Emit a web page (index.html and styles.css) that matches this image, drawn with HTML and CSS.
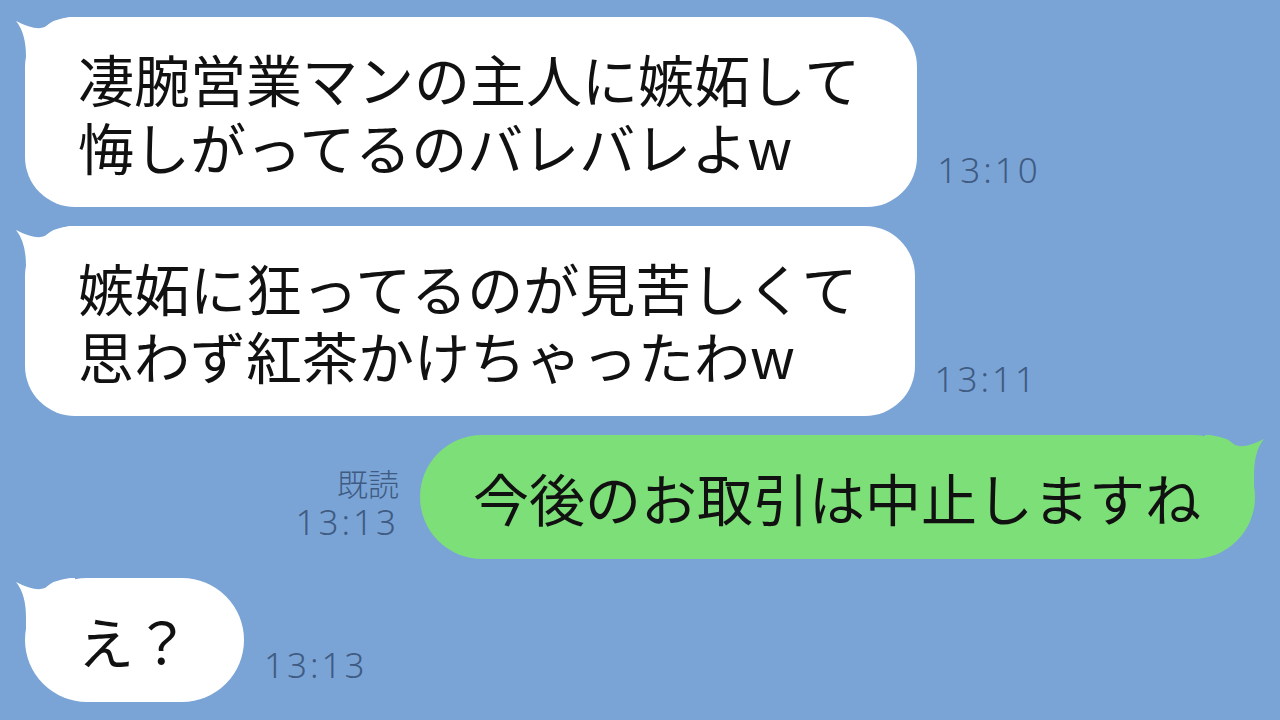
FILE: index.html
```html
<!DOCTYPE html>
<html lang="ja">
<head>
<meta charset="utf-8">
<link rel="stylesheet" href="styles.css">
</head>
<body>
<div class="chat">
  <div class="row left">
    <div class="bubble white">
      <svg class="tail" viewBox="-10 0 60 60" width="60" height="60"><path d="M -9 4 Q 1 16 1 40 L 1 60 L 55 60 L 55 0 L 45 0 Q 28 2 20 10 Q 10 14 -9 4 Z"/></svg>
      <p class="msg">凄腕営業マンの主人に嫉妬して<br>悔しがってるのバレバレよw</p>
    </div>
    <div class="meta"><span class="time">13:10</span></div>
  </div>
  <div class="row left">
    <div class="bubble white">
      <svg class="tail" viewBox="-10 0 60 60" width="60" height="60"><path d="M -9 4 Q 1 16 1 40 L 1 60 L 55 60 L 55 0 L 45 0 Q 28 2 20 10 Q 10 14 -9 4 Z"/></svg>
      <p class="msg">嫉妬に狂ってるのが見苦しくて<br>思わず紅茶かけちゃったわw</p>
    </div>
    <div class="meta"><span class="time">13:11</span></div>
  </div>
  <div class="row right">
    <div class="meta meta-right"><span class="read">既読</span><span class="time">13:13</span></div>
    <div class="bubble green pill">
      <svg class="tail tail-right" viewBox="-10 0 60 60" width="60" height="60"><path d="M -9 4 Q 1 16 1 40 L 1 60 L 55 60 L 55 0 L 45 0 Q 28 2 20 10 Q 10 14 -9 4 Z"/></svg>
      <p class="msg">今後のお取引は中止しますね</p>
    </div>
  </div>
  <div class="row left">
    <div class="bubble white pill">
      <svg class="tail" viewBox="-10 0 60 60" width="60" height="60"><path d="M -9 4 Q 1 16 1 40 L 1 60 L 55 60 L 55 0 L 45 0 Q 28 2 20 10 Q 10 14 -9 4 Z"/></svg>
      <p class="msg">え？</p>
    </div>
    <div class="meta"><span class="time">13:13</span></div>
  </div>
</div>
</body>
</html>
```
FILE: styles.css
```css
html, body {
  margin: 0;
  padding: 0;
}
body {
  width: 1280px;
  height: 720px;
  overflow: hidden;
  background: #7ba4d6;
  font-family: "Noto Sans CJK JP", "Noto Sans", sans-serif;
}
.chat {
  display: flex;
  flex-direction: column;
  gap: 19px;
  padding: 17px 25px 0 25px;
}
.row {
  display: flex;
  align-items: flex-end;
  gap: 20px;
}
.row.right {
  justify-content: flex-end;
  gap: 21px;
}
.bubble {
  position: relative;
  border-radius: 50px;
  padding: 27px 57px 27px 53px;
}
.bubble.pill {
  border-radius: 62px;
  padding: 28px 54px 28px 53px;
}
.white {
  background: #ffffff;
  fill: #ffffff;
}
.green {
  background: #7ddf78;
  fill: #7ddf78;
}
.tail {
  position: absolute;
  left: -10px;
  top: 0;
}
.tail-right {
  left: auto;
  right: -10px;
  transform: scaleX(-1);
}
.msg {
  position: relative;
  margin: 0;
  font-size: 56px;
  line-height: 68px;
  color: #111111;
  white-space: nowrap;
}
.meta {
  display: flex;
  flex-direction: column;
  align-items: flex-end;
  padding-bottom: 17px;
  color: #3f5b82;
}
.time {
  font-family: "Noto Sans", "Liberation Sans", sans-serif;
  font-weight: 300;
  font-size: 35px;
  line-height: 40px;
  letter-spacing: 3px;
}
.read {
  font-family: "Noto Sans CJK JP", sans-serif;
  font-weight: 300;
  font-size: 31px;
  line-height: 38px;
}
```
